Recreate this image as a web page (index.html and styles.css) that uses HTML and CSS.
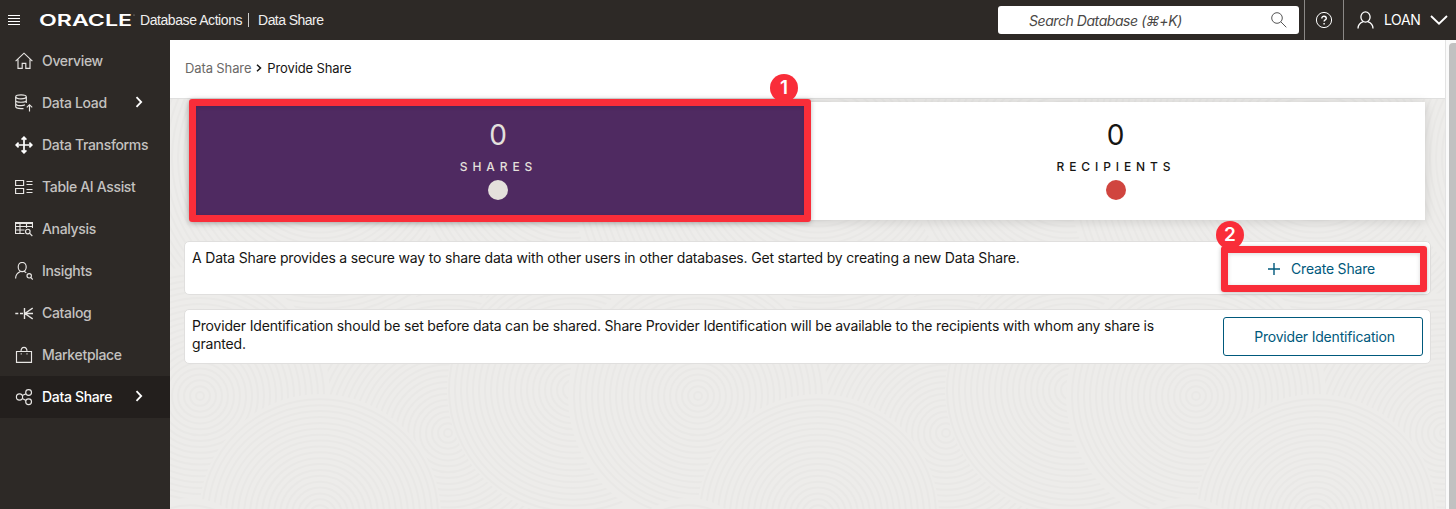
FILE: index.html
```html
<!DOCTYPE html>
<html lang="en">
<head>
<meta charset="utf-8">
<title>Data Share</title>
<link rel="stylesheet" href="styles.css">
</head>
<body>
<header class="topbar">
  <svg class="burger" width="12" height="12" viewBox="0 0 12 12" stroke="#fff" stroke-width="1"><path d="M0 1.5h12M0 4.5h12M0 7.5h12M0 10.5h12"/></svg>
  <svg class="logo" width="96" height="14" viewBox="0 0 96 14"><text x="-1" y="13" textLength="93" lengthAdjust="spacingAndGlyphs">ORACLE</text><circle cx="94" cy="2" r=".6" fill="#aaa"/></svg>
  <span class="product">Database Actions</span><span class="divider"></span><span class="product page">Data Share</span>
  <div class="search"><span>Search Database (⌘+K)</span>
    <svg width="16" height="16" viewBox="0 0 16 16" fill="none" stroke="#555" stroke-width="1"><circle cx="6" cy="6" r="5.3"/><path d="M9.8 9.8 15.3 15.3"/></svg>
  </div>
  <div class="help"><svg width="18" height="18" viewBox="0 0 18 18" fill="none" stroke="#fff"><circle cx="9" cy="9" r="7.6"/><path stroke-width="1.4" d="M6.8 7.4c0-3 4.5-2.8 4.5 0 0 1.6-2.2 1.5-2.2 3.1M9.1 12v1.4"/></svg></div>
  <div class="user">
    <svg width="17" height="18" viewBox="0 0 17 18" fill="none" stroke="#fff" stroke-width="1.3"><ellipse cx="8.5" cy="6" rx="4.6" ry="5.2"/><path d="M1 17.5c0-3.4 2-5.6 5.2-6.8M16 17.5c0-3.4-2-5.6-5.2-6.8"/></svg>
    <span>LOAN</span>
    <svg width="18" height="10" viewBox="0 0 18 10" fill="none" stroke="#fff" stroke-width="1.9"><path d="m1 1 8 7.6L17 1"/></svg>
  </div>
</header>
<div class="shell">
<nav class="sidebar">
  <a class="item"><svg class="ic" viewBox="0 0 18 18"><path d="M.6 9.2 9 1.2l8.4 8M3 7.5v8.9h4.2v-5h3.6v5H15V7.5"/></svg><span>Overview</span></a>
  <a class="item"><svg class="ic" viewBox="0 0 18 18"><ellipse cx="6" cy="2.8" rx="5.3" ry="2"/><path d="M.7 3v9.6c0 1.2 2.3 2 5.3 2h2.5M11.3 3v6M.7 6.2c0 2.7 10.6 2.7 10.6 0M.7 9.4c0 2.6 7 2.8 9.3 1.4M14.5 17.5v-6M11.8 13.4l2.7-2.7 2.7 2.7"/></svg><span>Data Load</span><svg class="chev" viewBox="0 0 8 12"><path d="m1.5 1.2 4.7 4.8-4.7 4.8"/></svg></a>
  <a class="item"><svg class="ic bold" viewBox="0 0 18 18"><path d="M9 1.5v15M1.5 9h15M6.6 3.6 9 1.2l2.4 2.4M6.6 14.4 9 16.8l2.4-2.4M3.6 6.6 1.2 9l2.4 2.4M14.4 6.6 16.8 9l-2.4 2.4"/></svg><span>Data Transforms</span></a>
  <a class="item"><svg class="ic" viewBox="0 0 18 18"><path d="M.6 2.5h8v5h-8zM.6 10.5h8v5h-8zM11.5 3.5h6M11.5 6.5h6M11.5 11.5h6M11.5 14.5h6"/></svg><span>Table AI Assist</span></a>
  <a class="item"><svg class="ic" viewBox="0 0 18 18"><path d="M17.5 8V2.5H.5v11h9M.5 3.5h17M.5 6.5h17M.5 10h9M5 3v10.5M11.5 3v5"/><circle cx="12.8" cy="11.5" r="2.3"/><path d="m14.5 13.2 2.8 2.8"/></svg><span>Analysis</span></a>
  <a class="item"><svg class="ic" viewBox="0 0 18 18"><ellipse cx="7.2" cy="5" rx="4" ry="4.6"/><path d="M.6 16.5c0-3.5 1.8-5.7 4.8-7M9 9.3l2.3 1.4"/><circle cx="14.2" cy="13.8" r="2.2"/><path d="m15.8 15.5 2 2"/></svg><span>Insights</span></a>
  <a class="item"><svg class="ic" viewBox="0 0 18 18"><path stroke-width="1.4" d="M.3 9.5h3M5 9.5h3M9.5 4v11M9.5 9.5H18M9.8 9.5 17.7 4M9.8 9.5l7.9 5.4"/></svg><span>Catalog</span></a>
  <a class="item"><svg class="ic" viewBox="0 0 18 18"><path d="M1.5 5.5h15v10.8h-15zM6 5.5c0-5.5 6-5.5 6 0M5.7 7.8h1M11.5 7.8h1"/></svg><span>Marketplace</span></a>
  <a class="item active"><svg class="ic" viewBox="0 0 18 18"><circle cx="4.5" cy="9" r="3.1"/><circle cx="13.6" cy="4.5" r="2.9"/><circle cx="13.6" cy="13.7" r="2.9"/><path d="m7.3 7.6 3.7-1.8M7.3 10.4l3.7 2"/></svg><span>Data Share</span><svg class="chev" viewBox="0 0 8 12"><path d="m1.5 1.2 4.7 4.8-4.7 4.8"/></svg></a>
</nav>
<main class="main">
  <svg class="texture" id="texture" width="1275" height="411"></svg>
  <div class="crumbs"><span class="muted">Data Share</span><svg width="6" height="8" viewBox="0 0 6 8" fill="none" stroke="#161513" stroke-width="1.5"><path d="m1 .7 3.500 3.300L1 7.300"/></svg><span>Provide Share</span></div>
  <div class="tabs">
    <div class="tab selected"><b>0</b><span>SHARES</span><i></i><div class="badge one">1</div></div>
    <div class="tab"><b>0</b><span>RECIPIENTS</span><i></i></div>
  </div>
  <section class="card first"><p>A Data Share provides a secure way to share data with other users in other databases. Get started by creating a new Data Share.</p>
    <div class="create"><svg width="12" height="12" viewBox="0 0 12 12" stroke="#00597c" stroke-width="1.4"><path d="M6 0v12M0 6h12"/></svg><span>Create Share</span><div class="badge two">2</div></div></section>
  <section class="card"><p>Provider Identification should be set before data can be shared. Share Provider Identification will be available to the recipients with whom any share is granted.</p>
    <div class="provider">Provider Identification</div></section>
</main>
<div class="scroll"><div class="thumb"></div></div>
</div>
<script src="texture.js"></script>
</body>
</html>
```
FILE: styles.css
```css
* { box-sizing: border-box; }
body { margin: 0; width: 1456px; height: 509px; overflow: hidden; font-family: Inter, "Liberation Sans", sans-serif; font-size: 14px; color: #161513; }
svg { flex: none; display: block; }
.topbar { height: 40px; background: #2d2926; display: flex; align-items: center; padding-left: 8px; color: #fff; }
.logo { margin-left: 20px; overflow: visible; }
.logo text { font: 600 16.5px Inter, sans-serif; fill: #fff; }
.product { font: 14px "Liberation Sans", sans-serif; letter-spacing: -.43px; margin-left: 4px; white-space: nowrap; color: #f0efee; }
.divider { width: 1px; height: 14px; background: #ccc; margin-left: 6px; }
.product.page { margin-left: 9px; letter-spacing: -.55px; }
.search { margin-left: auto; width: 301px; height: 28px; background: #fff; border-radius: 3px; display: flex; align-items: center; justify-content: space-between; padding: 0 12px 0 31px; color: #4a4846; font-style: italic; letter-spacing: -.44px; }
.help { margin-left: 5px; width: 39px; height: 40px; border-left: 1px solid #8b8886; display: flex; align-items: center; justify-content: center; }
.user { width: 113px; height: 40px; border-left: 1px solid #8b8886; display: flex; align-items: center; padding-left: 13px; }
.user span { margin: 0 9px 0 10px; width: 37px; letter-spacing: -.4px; padding-bottom: 1px; }
.shell { display: flex; height: 469px; }
.sidebar { width: 170px; background: #2d2926; flex: none; }
.item { height: 42px; display: flex; align-items: center; padding-left: 15px; color: #c4c2c0; font-weight: 500; letter-spacing: -.33px; position: relative; white-space: nowrap; }
.item span { margin-left: 9px; padding-bottom: 2px; }
.item.active { background: #231f1d; color: #fff; }
.ic { width: 18px; height: 18px; fill: none; stroke: #e8e6e4; stroke-width: 1.15; }
.ic.bold { stroke-width: 1.7; stroke: #fff; }
.chev { position: absolute; left: 135px; top: 14px; width: 8px; height: 12px; fill: none; stroke: #fff; stroke-width: 1.8; }
.main { position: relative; width: 1275px; height: 469px; background: #edecea; flex: none; }
.texture { position: absolute; left: 0; top: 58px; }
.crumbs { position: relative; height: 59px; background: #fff; border-bottom: 1px solid #dfdfde; display: flex; align-items: center; padding: 0 15px 2px; gap: 5px; font-size: 13px; letter-spacing: -.12px; }
.crumbs .muted { color: #6b6967; }
.tabs { position: relative; display: flex; margin: 3px 20px 0; height: 118px; box-shadow: 0 1px 10px rgba(0,0,0,.14); }
.tab { flex: 1; background: #fff; display: flex; flex-direction: column; align-items: center; padding-top: 16px; position: relative; }
.tab b { font-weight: 400; font-size: 28px; line-height: 34px; }
.tab span { font-size: 12px; font-weight: 500; letter-spacing: 4.9px; line-height: 16px; margin-top: 7px; margin-right: -1px; }
.tab i { width: 20px; height: 20px; border-radius: 50%; background: #d0453f; margin-top: 5px; }
.tab.selected { background: #4f2a61; color: #e4e0dc; flex: 0 0 616px; }
.tab.selected i { background: #e4e0dc; }
.tab.selected::after { content: ""; position: absolute; left: -1px; right: -5px; top: -3px; bottom: -2px; border: 7px solid #f92d39; border-radius: 3px; box-shadow: 0 1px 5px rgba(0,0,0,.25), inset 0 1px 4px rgba(0,0,0,.12); z-index: 1; }
.badge { position: absolute; z-index: 3; width: 28px; height: 28px; border-radius: 50%; background: #f92d39; color: #fff; font-weight: 600; font-size: 19px; line-height: 28px; text-align: center; letter-spacing: 0; }
.badge.one { left: 580px; top: -28px; }
.card { position: relative; margin: 14px 14px 0; height: 55px; border: 1px solid #e0dfde; border-radius: 5px; background: #fff; display: flex; justify-content: space-between; padding: 7px; letter-spacing: -.18px; }
.card.first { margin-top: 21px; height: 54px; }
.card p { margin: 0; width: 985px; line-height: 18px; }
.create, .provider { flex: none; width: 200px; height: 39px; display: flex; align-items: center; justify-content: center; color: #00597c; letter-spacing: -.2px; }
.provider { border: 1px solid #00597c; border-radius: 3px; padding-left: 3px; }
.create { position: relative; gap: 11px; padding-right: 3px; }
.create::after { content: ""; position: absolute; left: -2px; right: -4px; top: -3px; bottom: -4px; border: 7px solid #f92d39; border-radius: 3px; box-shadow: 0 1px 4px rgba(0,0,0,.25), inset 0 1px 4px rgba(0,0,0,.15); }
.badge.two { left: -7px; top: -28px; }
.scroll { width: 11px; background: #fafafa; border-left: 1px solid #e3e3e3; padding: 3px 0 0 3px; }
.thumb { height: 470px; background: #c1c1c1; border-radius: 4px 0 0 0; }
```
FILE: texture.js
```javascript
// Layered concentric rings; each disc hides the rings beneath it.
const rings = [
  [150, 60, 250], [400, 60, 160], [278, 335, 140], [30, 298, 130],
  [403, 292, 126], [150, 417, 121], [20, 470, 70]
];
let out = "";
for (let tile = -1; tile < 4; tile++) {
  for (const [x, y, radius] of rings) {
    const cx = x + tile * 498;
    out += `<circle cx="${cx}" cy="${y}" r="${radius}" fill="#edecea"/>`;
    for (let r = 4; r < radius; r += 6) {
      out += `<ellipse cx="${cx}" cy="${y}" rx="${r}" ry="${r * 0.98}" fill="none" stroke="#e9e8e6" stroke-width="2"/>`;
    }
  }
}
document.getElementById("texture").innerHTML = out;
```
